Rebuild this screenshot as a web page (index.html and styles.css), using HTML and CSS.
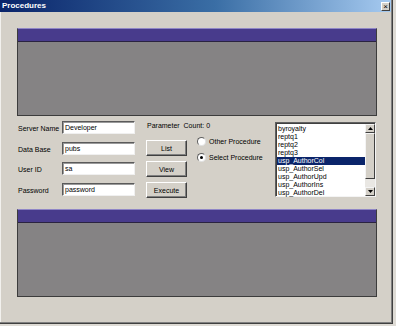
FILE: index.html
```html
<!DOCTYPE html>
<html>
<head>
<meta charset="utf-8">
<link rel="stylesheet" href="styles.css">
</head>
<body>
<div class="window">
  <div class="titlebar">
    <span class="title">Procedures</span>
    <span class="close">×</span>
  </div>
  <div class="client">
    <div class="grid"><div class="grid-head"></div><div class="grid-body"></div></div>
    <div class="controls">
      <div class="form">
        <div class="row"><span class="label">Server Name</span><span class="textbox">Developer</span></div>
        <div class="row"><span class="label">Data Base</span><span class="textbox">pubs</span></div>
        <div class="row"><span class="label">User ID</span><span class="textbox">sa</span></div>
        <div class="row"><span class="label">Password</span><span class="textbox">password</span></div>
      </div>
      <div class="actions">
        <div class="param">Parameter&nbsp; Count: 0</div>
        <div class="button">List</div>
        <div class="button">View</div>
        <div class="button">Execute</div>
      </div>
      <div class="options">
        <div class="radio"><span class="circle"></span>Other Procedure</div>
        <div class="radio checked"><span class="circle"></span>Select Procedure</div>
      </div>
      <div class="listbox">
        <div class="items">
          <div class="item">byroyalty</div>
          <div class="item">reptq1</div>
          <div class="item">reptq2</div>
          <div class="item">reptq3</div>
          <div class="item selected">usp_AuthorCol</div>
          <div class="item">usp_AuthorSel</div>
          <div class="item">usp_AuthorUpd</div>
          <div class="item">usp_AuthorIns</div>
          <div class="item">usp_AuthorDel</div>
        </div>
        <div class="scrollbar">
          <div class="sb-btn"><svg width="5" height="3" viewBox="0 0 5 3"><path d="M2.5 0 L5 3 L0 3 Z" fill="#000"/></svg></div>
          <div class="sb-thumb"></div>
          <div class="sb-track"></div>
          <div class="sb-btn"><svg width="5" height="3" viewBox="0 0 5 3"><path d="M0 0 L5 0 L2.5 3 Z" fill="#000"/></svg></div>
        </div>
      </div>
    </div>
    <div class="grid"><div class="grid-head"></div><div class="grid-body"></div></div>
  </div>
</div>
</body>
</html>
```
FILE: styles.css
```css
html, body {
  margin: 0;
  padding: 0;
  background: #dedbd5;
}
body {
  width: 396px;
  height: 326px;
  overflow: hidden;
  font-family: "Liberation Sans", Arial, sans-serif;
  font-size: 7px;
  color: #000;
}
.window {
  width: 393px;
  height: 324px;
  box-sizing: border-box;
  background: #d4d0c8;
  border-right: 1px solid #404040;
  border-bottom: 1px solid #404040;
  box-shadow: inset -1px -1px 0 #808080, inset 1px 0 0 #f2f1ee;
  display: flex;
  flex-direction: column;
}
.titlebar {
  height: 12px;
  margin-right: 1px;
  background: linear-gradient(to right, #0a246a 0%, #3a6ea5 55%, #a6caf0 100%);
  display: flex;
  align-items: center;
  justify-content: space-between;
  padding: 0 1px 0 2px;
}
.title {
  color: #fff;
  font-weight: bold;
  font-size: 8px;
  line-height: 12px;
}
.close {
  width: 7px;
  height: 7px;
  background: #d4d0c8;
  border: 1px solid;
  border-color: #fff #404040 #404040 #fff;
  font-size: 8px;
  line-height: 7px;
  text-align: center;
  color: #000;
}
.client {
  flex: 1;
  padding: 16px 0 0 17px;
  display: flex;
  flex-direction: column;
}
.grid {
  width: 360px;
  height: 88px;
  box-sizing: border-box;
  border: 1px solid #3c3c3c;
  border-top-color: #8f86c6;
  display: flex;
  flex-direction: column;
}
.grid-head {
  height: 12px;
  background: #483b8c;
  border-bottom: 1px solid #2a2340;
}
.grid-body {
  flex: 1;
  background: #858384;
}
.controls {
  height: 93px;
  display: flex;
  align-items: flex-start;
}
.form {
  margin-top: 5px;
  display: flex;
  flex-direction: column;
  gap: 7.6px;
}
.row {
  display: flex;
  align-items: center;
  height: 13px;
}
.label {
  width: 44px;
  padding-left: 1px;
  margin-top: 2px;
}
.textbox {
  width: 73px;
  height: 13px;
  box-sizing: border-box;
  background: #fff;
  border: 1px solid;
  border-color: #5a5a5a #f0f0f0 #f0f0f0 #5a5a5a;
  box-shadow: inset 1px 1px 0 #9a9a9a;
  padding: 1px 0 0 2px;
  line-height: 9px;
}
.actions {
  margin-left: 11px;
  width: 41px;
  display: flex;
  flex-direction: column;
  gap: 5px;
  margin-top: 5px;
}
.param {
  height: 10px;
  line-height: 10px;
  padding-left: 1px;
  white-space: nowrap;
  margin-bottom: 4px;
}
.button {
  height: 16px;
  box-sizing: border-box;
  border: 1px solid;
  border-color: #fff #404040 #404040 #fff;
  box-shadow: inset -1px -1px 0 #808080;
  display: flex;
  align-items: center;
  justify-content: center;
}
.options {
  margin-left: 10px;
  width: 78px;
  margin-top: 20px;
  display: flex;
  flex-direction: column;
  gap: 6px;
}
.radio {
  height: 10px;
  display: flex;
  align-items: center;
  white-space: nowrap;
}
.circle {
  width: 9px;
  height: 9px;
  box-sizing: border-box;
  border-radius: 50%;
  background: #fff;
  border: 1px solid;
  border-color: #606060 #e0e0e0 #e0e0e0 #606060;
  margin-right: 3px;
  display: flex;
  align-items: center;
  justify-content: center;
}
.checked .circle::after {
  content: "";
  width: 3px;
  height: 3px;
  border-radius: 50%;
  background: #000;
}
.listbox {
  margin-top: 6px;
  width: 101px;
  height: 75px;
  box-sizing: border-box;
  background: #fff;
  border: 1px solid;
  border-color: #606060 #f4f4f4 #f4f4f4 #606060;
  box-shadow: inset 1px 1px 0 #404040;
  padding: 1px 0 0 1px;
  display: flex;
}
.items {
  flex: 1;
  padding-top: 0.5px;
}
.item {
  height: 8px;
  line-height: 8px;
  padding-left: 1px;
  white-space: nowrap;
}
.selected {
  background: #0a246a;
  color: #fff;
}
.scrollbar {
  width: 10px;
  display: flex;
  flex-direction: column;
  background: #e9e7e3;
}
.sb-btn {
  height: 9px;
  box-sizing: border-box;
  background: #d4d0c8;
  border: 1px solid;
  border-color: #f4f4f4 #404040 #404040 #f4f4f4;
  display: flex;
  align-items: center;
  justify-content: center;
}
.sb-thumb {
  height: 46px;
  box-sizing: border-box;
  background: #d4d0c8;
  border: 1px solid;
  border-color: #f4f4f4 #404040 #404040 #f4f4f4;
}
.sb-track {
  flex: 1;
}
```
